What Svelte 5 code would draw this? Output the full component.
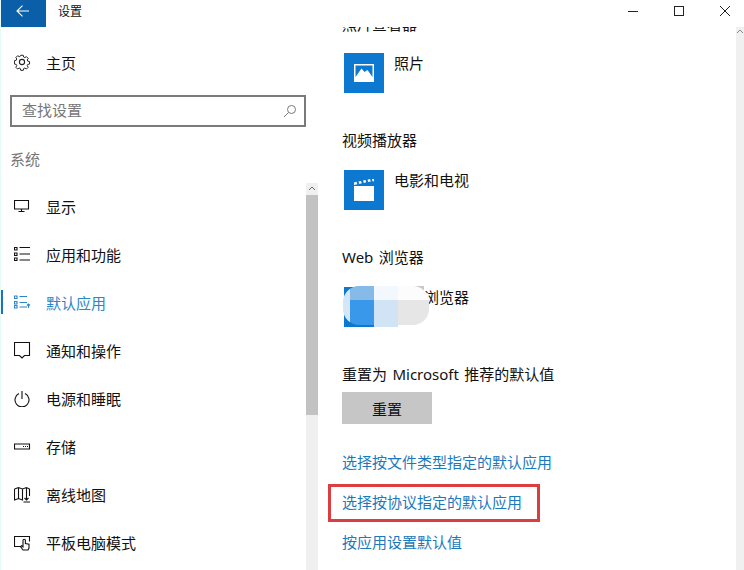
<script>
  const navItems = [
    { label: '显示', icon: 'display' },
    { label: '应用和功能', icon: 'apps' },
    { label: '默认应用', icon: 'defaults', active: true },
    { label: '通知和操作', icon: 'notify' },
    { label: '电源和睡眠', icon: 'power' },
    { label: '存储', icon: 'storage' },
    { label: '离线地图', icon: 'map' },
    { label: '平板电脑模式', icon: 'tablet' }
  ];
</script>

<div class="window">
  <header class="titlebar">
    <button class="back" aria-label="返回">
      <svg width="14" height="12" viewBox="0 0 14 12" fill="none" stroke="#fff" stroke-width="1.1">
        <path d="M13 6H1M6.500 .7 1 6l5.500 5.300" />
      </svg>
    </button>
    <span class="title">设置</span>
    <div class="controls">
      <svg width="12" height="12" viewBox="0 0 12 12" fill="none" stroke="#222" stroke-width="1"><path d="M1 6.500h10" /></svg>
      <svg width="12" height="12" viewBox="0 0 12 12" fill="none" stroke="#222" stroke-width="1"><rect x="1.500" y="1.500" width="9" height="9" /></svg>
      <svg width="12" height="12" viewBox="0 0 12 12" fill="none" stroke="#222" stroke-width="1"><path d="M1 1l10 10M11 1 1 11" /></svg>
    </div>
  </header>

  <div class="body">
    <aside class="sidebar">
      <div class="home">
        <svg class="icon" width="18" height="18" viewBox="0 0 18 18" fill="none" stroke="#222" stroke-width="1.100">
          <circle cx="8" cy="9" r="2.600" />
          <path d="M6.600 1.500h2.800l.4 2 1.400.6 1.700-1.100 2 2-1.100 1.700.6 1.400 2 .4v2.800l-2 .4-.6 1.400 1.100 1.700-2 2-1.700-1.100-1.400.6-.4 2H6.600l-.4-2-1.400-.6-1.700 1.100-2-2 1.100-1.700-.6-1.400-2-.4V7.500l2-.4.6-1.400L1.200 4l2-2 1.700 1.100 1.300-.6z" transform="translate(.8 .9) scale(.9)" />
        </svg>
        <span>主页</span>
      </div>
      <div class="search">
        <span class="hint">查找设置</span>
        <svg width="14" height="14" viewBox="0 0 14 14" fill="none" stroke="#777" stroke-width="1"><circle cx="8.500" cy="5.500" r="4" /><path d="M5.500 8.500 1 13" /></svg>
      </div>
      <div class="section">系统</div>
      <nav>
        {#each navItems as item}
          <div class="item" class:active={item.active}>
            <svg class="icon" width="18" height="18" viewBox="0 0 18 18" fill="none" stroke="currentColor" stroke-width="1.100">
              {#if item.icon === 'display'}
                <path d="M.5 3.500h14v8.500H.5zM7.500 12v2.500M4.500 14.500h6" />
              {:else if item.icon === 'apps'}
                <path d="M.5 2.500h2.500v2.500H.5zM.5 8h2.500v2.500H.5zM.5 13h2.500v2.500H.5zM5.500 2.500H16M5.500 9H16M5.500 15H16" />
              {:else if item.icon === 'defaults'}
                <path d="M.5 3h2.500v2.500H.5zM.5 8.500h2.500V11H.5zM.5 12.500h2.500V15H.5zM5.500 3.500H13M5.500 9.500H13M5.500 14H13M14.500 15v-4M13 12.500l1.500-1.500 1.500 1.500" />
              {:else if item.icon === 'notify'}
                <path d="M.5 1.500h15v13h-5L8 17l-2.500-2.500h-5z" />
              {:else if item.icon === 'power'}
                <path d="M5 4.600a7 7 0 1 0 6 0M8 2v8" />
              {:else if item.icon === 'storage'}
                <path d="M.5 7h15v5H.5zM9 9.500h1M11 9.500h1M13 9.500h1" />
              {:else if item.icon === 'map'}
                <path d="M.5 4l4-1.500 4 1.500 4-1.500 3 1.500v7M.5 4v11l4-1.500L8.500 15V4M4.500 2.500v11M12.500 3v4M12.500 7v8M10.500 13l2 2 2-2M9.500 17h6.500" />
              {:else}
                <path d="M7 13.500H.5v-10h15v5M9 17l-2.500-3.500 1-.8L9 13.800V7.500a1.200 1.200 0 0 1 2.400 0v3l3.600.8V15l-1 2z" />
              {/if}
            </svg>
            <span>{item.label}</span>
          </div>
        {/each}
      </nav>
    </aside>

    <div class="scrollbar side">
      <svg class="chevron" width="12" height="12" viewBox="0 0 12 12" fill="none" stroke="#666"><path d="M3 7l3-3 3 3" /></svg>
      <div class="thumb"></div>
    </div>

    <main class="content">
      <h2 class="clipped">照片查看器</h2>
      <div class="app-row">
        <div class="tile">
          <svg width="20" height="18" viewBox="0 0 20 18"><path fill="#fff" fill-rule="evenodd" d="M0 0h20v18H0zM1.500 1.500v11.500l6-8.500 3 3.500 3-2 5 7V1.500z" /></svg>
        </div>
        <span>照片</span>
      </div>

      <h2>视频播放器</h2>
      <div class="app-row">
        <div class="tile">
          <svg width="20" height="22" viewBox="0 0 20 22"><path fill="#fff" d="M0 7h20v15H0zM0 3.500l2.500-.7.800 2.400-3.300.8zM4.500 2.500l2.500-.6.800 2.400-2.500.6zM9 1.500l2.500-.6.800 2.400-2.500.6zM13.500.7 16 .1l.8 2.400-2.500.6zM18 0h2v2.300l-1.400.3z" /></svg>
        </div>
        <span>电影和电视</span>
      </div>

      <h2>Web 浏览器</h2>
      <div class="app-row">
        <div class="tile"></div>
        <span class="browser">浏览器</span>
        <i class="under corner"></i>
        <i class="under strip"></i>
        <div class="mosaic">
          <i class="m1"></i><i class="m2"></i><i class="m3"></i><i class="m4"></i>
          <i class="m5"></i><i class="m6"></i><i class="m7"></i><i class="m8"></i>
        </div>
      </div>

      <p class="reset-label">重置为 Microsoft 推荐的默认值</p>
      <button class="reset">重置</button>

      <div class="links">
        <a href="#a">选择按文件类型指定的默认应用</a>
        <a href="#b" class="marked">选择按协议指定的默认应用</a>
        <a href="#c">按应用设置默认值</a>
      </div>
    </main>

    <div class="scrollbar main">
      <svg class="chevron" width="8" height="10" viewBox="0 0 8 10" fill="none" stroke="#888"><path d="M1 6l3-3 3 3" /></svg>
    </div>
  </div>
</div>

<style>
  :global(body) {
    margin: 0;
    background: #fff;
  }
  .window {
    width: 744px;
    height: 570px;
    overflow: hidden;
    display: flex;
    flex-direction: column;
    font-family: "Noto Sans", "Noto Sans CJK SC", sans-serif;
    font-size: 15px;
    color: #111;
    background: #fff;
    border-left: 1px solid #e4fbf8;
    box-sizing: border-box;
  }
  .titlebar {
    height: 27px;
    flex: none;
    display: flex;
    align-items: center;
    position: relative;
    z-index: 1;
    background: #fff;
    margin-bottom: -2px;
  }
  .back {
    width: 45px;
    height: 27px;
    margin: 0;
    padding: 0 2px 5px 0;
    border: none;
    background: #0b5ea8;
    display: flex;
    align-items: center;
    justify-content: center;
  }
  .title {
    margin-left: 12px;
    padding-bottom: 5px;
    font-size: 12px;
  }
  .controls {
    margin-left: auto;
    margin-right: 13px;
    display: flex;
    gap: 34px;
    padding-bottom: 6px;
  }
  .body {
    flex: 1;
    min-height: 0;
    display: flex;
  }
  .sidebar {
    width: 305px;
    flex: none;
  }
  .home {
    display: flex;
    align-items: center;
    height: 24px;
    margin-top: 25px;
    padding-left: 13px;
    gap: 14px;
  }
  .icon {
    flex: none;
  }
  .search {
    display: flex;
    align-items: center;
    justify-content: space-between;
    box-sizing: border-box;
    width: 296px;
    height: 32px;
    margin: 21px 0 0 9px;
    padding: 0 7px 0 10px;
    border: 2px solid #7a7a7a;
    color: #777;
  }
  .hint {
    padding-bottom: 4px;
  }
  .section {
    margin: 20px 0 0 9px;
    height: 24px;
    line-height: 24px;
    font-size: 15px;
    color: #777;
  }
  nav {
    margin-top: 11px;
  }
  .item {
    position: relative;
    display: flex;
    align-items: center;
    height: 48px;
    padding-left: 13px;
    gap: 14px;
  }
  .item.active {
    color: #2a86c8;
  }
  .item.active::before {
    content: "";
    position: absolute;
    left: -1px;
    top: 12px;
    width: 3px;
    height: 24px;
    background: #1a73c4;
  }
  .scrollbar {
    flex: none;
    background: #f0f0f0;
  }
  .scrollbar.side {
    width: 12px;
    margin-top: 158px;
    box-sizing: border-box;
  }
  .chevron {
    display: block;
  }
  .thumb {
    height: 220px;
    background: #c2c2c2;
  }
  .content {
    flex: 1;
    min-width: 0;
    padding-left: 24px;
    overflow: hidden;
  }
  h2 {
    margin: 0;
    height: 24px;
    line-height: 24px;
    font-size: 15px;
    font-weight: 400;
    word-spacing: 1.5px;
  }
  h2.clipped {
    margin-top: -13px;
  }
  .app-row {
    position: relative;
    display: flex;
    margin: 18px 0 35px 2px;
    height: 40px;
    gap: 10px;
  }
  h2.clipped + .app-row {
    margin-top: 17px;
  }
  .app-row > span {
    line-height: 20px;
  }
  .tile {
    width: 40px;
    height: 40px;
    background: #0c78d0;
    display: flex;
    align-items: center;
    justify-content: center;
  }
  .browser {
    margin-left: 30px;
  }
  .under {
    position: absolute;
  }
  .corner {
    left: 54px;
    top: -1px;
    width: 26px;
    height: 14px;
    background: #c9c9c9;
  }
  .strip {
    left: 30px;
    top: 36px;
    width: 24px;
    height: 4px;
    background: #d0e4f5;
  }
  .mosaic {
    position: absolute;
    left: -1px;
    top: -1px;
    width: 86px;
    height: 39px;
    border-radius: 16px;
    overflow: hidden;
    display: grid;
    grid-template-columns: 7px 24px 24px 31px;
    grid-template-rows: 14px 25px;
  }
  .m1 { background: #d3e7f8; }
  .m2 { background: #86bbe9; }
  .m3 { background: #f2f8fd; }
  .m4 { background: #fcfcfc; }
  .m5 { background: #d3e7f8; }
  .m6 { background: #3a98ea; }
  .m7 { background: #d0e4f5; }
  .m8 { background: #e6e6e6; }
  .reset-label {
    margin: 0;
    height: 24px;
    line-height: 24px;
    word-spacing: 1.5px;
  }
  .reset {
    display: block;
    width: 90px;
    height: 32px;
    margin: 6px 0 0;
    padding: 0;
    border: none;
    background: #c6c6c6;
    color: #111;
    font: inherit;
  }
  .links {
    display: flex;
    flex-direction: column;
    align-items: flex-start;
    gap: 16px;
    margin-top: 26px;
  }
  .links a {
    height: 24px;
    line-height: 24px;
    color: #1c79bd;
    text-decoration: none;
  }
  .marked {
    position: relative;
  }
  .marked::after {
    content: "";
    position: absolute;
    left: -14px;
    right: -18px;
    top: -6px;
    bottom: -8px;
    border: 3px solid #dc3d3f;
  }
  .scrollbar.main {
    width: 8px;
    margin-top: 2px;
  }
</style>
